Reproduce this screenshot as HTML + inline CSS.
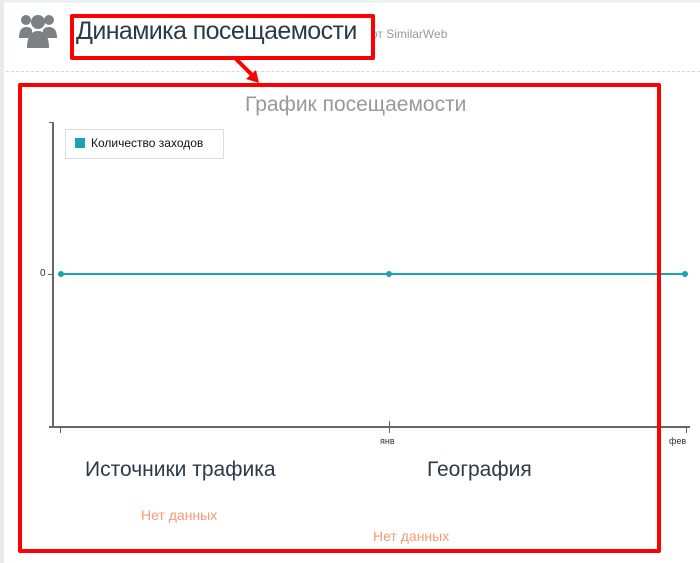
<!DOCTYPE html>
<html><head><meta charset="utf-8"><style>
body{margin:0;width:700px;height:563px;background:#fff;position:relative;overflow:hidden;font-family:"Liberation Sans",sans-serif}
.t{position:absolute;white-space:nowrap}
</style></head><body>
<div style="position:absolute;left:0;top:0;width:700px;height:3px;background:#eef1f4"></div>
<div style="position:absolute;left:0;top:0;width:4px;height:563px;background:#e6ecee"></div>
<div style="position:absolute;left:6px;top:71px;width:694px;border-top:1px dashed #d4d8dc"></div>
<svg style="position:absolute;left:18px;top:12px" width="40" height="36" viewBox="0 0 40 36" fill="#7b8184">
<circle cx="8" cy="8" r="5"/><circle cx="31" cy="8" r="5"/><circle cx="20" cy="10" r="7"/>
<path d="M1 26 Q1 15 8 15 Q13 15 14 18 L14 26Z"/><path d="M39 26 Q39 15 31 15 Q26 15 25 18 L25 26Z"/>
<path d="M9 36 Q9 19 20 19 Q31 19 31 36Z"/></svg>
<div class="t" style="left:371px;top:27px;font-size:12px;color:#999">от SimilarWeb</div>
<div style="position:absolute;left:74px;top:18px;width:293px;height:34px;background:#fff"></div>
<div class="t" style="left:76px;top:17px;font-size:25px;letter-spacing:-0.6px;color:#2b3a4a">Динамика посещаемости</div>
<div style="position:absolute;left:70px;top:14px;width:297px;height:38px;border:4px solid #f00;border-radius:2px"></div>
<svg style="position:absolute;left:228px;top:55px" width="40" height="30"><line x1="8" y1="4" x2="26" y2="22" stroke="#f00" stroke-width="4"/><path d="M18 24 L31 28 L28 15Z" fill="#f00"/></svg>
<div class="t" style="left:245px;top:93px;font-size:21px;color:#999">График посещаемости</div>
<div style="position:absolute;left:52px;top:122px;width:2px;height:306px;background:#666"></div>
<div style="position:absolute;left:49px;top:122px;width:4px;height:1px;background:#666"></div>
<div style="position:absolute;left:49px;top:426px;width:641px;height:2px;background:#666"></div>
<div style="position:absolute;left:60px;top:427px;width:1px;height:6px;background:#666"></div>
<div style="position:absolute;left:389px;top:421px;width:1px;height:12px;background:#666"></div>
<div style="position:absolute;left:686px;top:427px;width:1px;height:6px;background:#666"></div>
<div style="position:absolute;left:48px;top:274px;width:5px;height:1px;background:#666"></div>
<div class="t" style="left:40px;top:268px;font-size:10px;color:#333">0</div>
<div style="position:absolute;left:60px;top:273px;width:627px;height:2px;background:#1aa3b0"></div>
<div style="position:absolute;left:58px;top:271px;width:6px;height:6px;border-radius:50%;background:#1aa3b0"></div>
<div style="position:absolute;left:386px;top:271px;width:6px;height:6px;border-radius:50%;background:#1aa3b0"></div>
<div style="position:absolute;left:682px;top:271px;width:6px;height:6px;border-radius:50%;background:#1aa3b0"></div>
<div style="position:absolute;left:65px;top:129px;width:157px;height:28px;border:1px solid #ddd;background:#fff"></div>
<div style="position:absolute;left:75px;top:138px;width:10px;height:10px;background:#1aa3b0"></div>
<div class="t" style="left:91px;top:136px;font-size:12px;color:#111">Количество заходов</div>
<div class="t" style="left:380px;top:436px;font-size:9px;color:#333">янв</div>
<div class="t" style="left:669px;top:436px;font-size:9px;color:#333">фев</div>
<div class="t" style="left:85px;top:458px;font-size:21px;color:#2b3a4a">Источники трафика</div>
<div class="t" style="left:427px;top:458px;font-size:21px;color:#2b3a4a">География</div>
<div class="t" style="left:141px;top:507px;font-size:14px;color:#f79a72">Нет данных</div>
<div class="t" style="left:373px;top:528px;font-size:14px;color:#f79a72">Нет данных</div>
<div style="position:absolute;left:18px;top:83px;width:635px;height:462px;border:4px solid #f00;border-radius:2px"></div>
</body></html>
